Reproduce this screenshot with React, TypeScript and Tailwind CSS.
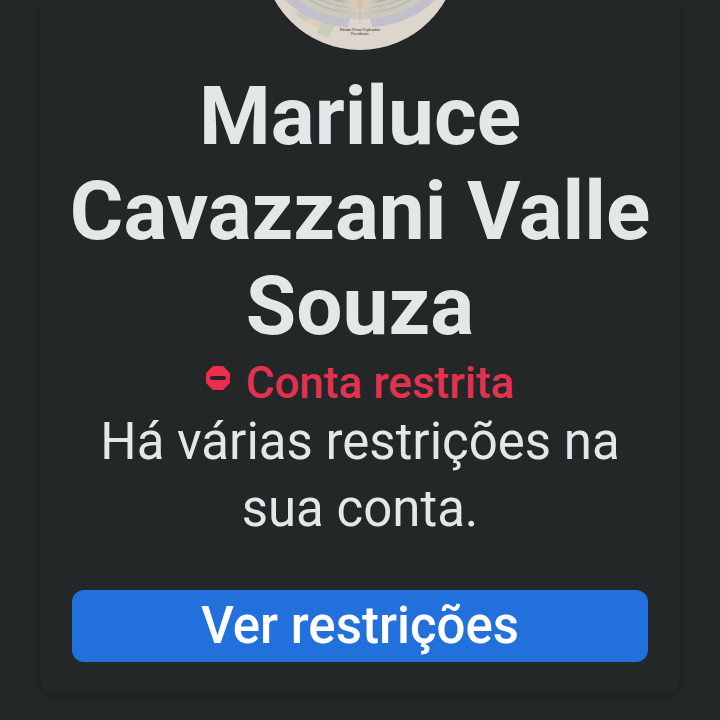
function Avatar() {
  return (
    <svg
      viewBox="0 146 196 50"
      className="mx-auto block w-[196px]"
      role="img"
      aria-label="Foto do perfil"
    >
      <defs>
        <clipPath id="avatar-clip">
          <circle cx="98" cy="98" r="98" />
        </clipPath>
        <radialGradient id="avatar-glow" cx="98" cy="149" r="22" gradientUnits="userSpaceOnUse">
          <stop offset="0" stopColor="#e8b8a4" />
          <stop offset="0.3" stopColor="#d5ccba" />
          <stop offset="1" stopColor="#c9c8bc" stopOpacity="0" />
        </radialGradient>
      </defs>
      <g clipPath="url(#avatar-clip)">
        <rect y="146" width="196" height="50" fill="#ddd6cc" />
        <path d="M42 166l16-20h16l-16 29z" fill="#d9cfb8" />
        <path d="M33 160l11-14h14l-14 22z" fill="#c5cdbc" />
        <path d="M55 179l10-18 12 4-11 19z" fill="#c6cdbe" />
        <ellipse cx="98" cy="115" rx="88" ry="59" fill="#c2c0ca" />
        <ellipse cx="98" cy="113" rx="80" ry="52" fill="#cbcabf" />
        <ellipse cx="98" cy="112" rx="73" ry="47" fill="none" stroke="#b9bdb1" strokeWidth="2" />
        <ellipse cx="98" cy="111" rx="67" ry="43" fill="none" stroke="#c2b7b6" strokeWidth="2" />
        <ellipse cx="98" cy="110" rx="62" ry="39" fill="none" stroke="#adb2a4" strokeWidth="2" />
        <rect x="76" y="146" width="44" height="22" fill="url(#avatar-glow)" />
        <path d="M88 165h20l3 10H85z" fill="#ddd6cc" />
        <path d="M98 146v24" stroke="#c2bbaf" strokeWidth="1" />
        <text
          x="98"
          y="177"
          textAnchor="middle"
          className="fill-[#67635f] font-['Liberation_Serif',serif] text-[4px] font-bold"
        >
          Divino Pleno Esplendor
        </text>
        <text
          x="98"
          y="181"
          textAnchor="middle"
          className="fill-[#67635f] font-['Liberation_Serif',serif] text-[4px] font-bold"
        >
          Presidente
        </text>
      </g>
    </svg>
  )
}

function RestrictedIcon() {
  return (
    <svg viewBox="0 0 24 24" className="mt-2 size-6 shrink-0" aria-hidden="true">
      <path
        fill="#ee2c4e"
        fillRule="evenodd"
        d="M7.800 0h8.400a2 2 0 0 1 1.400.6l5.800 5.800a2 2 0 0 1 .6 1.400v8.400a2 2 0 0 1-.6 1.400l-5.800 5.800a2 2 0 0 1-1.400.6H7.800a2 2 0 0 1-1.400-.6L.6 17.600a2 2 0 0 1-.6-1.400V7.800a2 2 0 0 1 .6-1.400L6.400.6A2 2 0 0 1 7.800 0zM6 10a2 2 0 0 0 0 4h12a2 2 0 0 0 0-4z"
      />
    </svg>
  )
}

export default function App() {
  return (
    <main className="min-h-screen bg-[#232728] px-10 pb-[26px] font-[Roboto,sans-serif] text-[#e3e7e8]">
      <section className="rounded-b-2xl bg-[#232728] px-7 pb-8 text-center shadow-[0_4px_10px_rgba(0,0,0,0.2)]">
        <Avatar />

        <h1 className="mt-[19px] text-[82px] leading-[95px] font-bold">
          Mariluce Cavazzani Valle Souza
        </h1>

        <div className="mt-1 flex justify-center gap-4 text-[#e2324f]">
          <RestrictedIcon />
          <p className="text-[44px] leading-[50px] font-medium">Conta restrita</p>
        </div>

        <p className="px-1 text-[51px] leading-[67px]">
          Há várias restrições na sua conta.
        </p>

        <div className="mt-12 px-1">
          <button
            type="button"
            className="block h-[72px] w-full rounded-xl bg-[#2270dc] text-[51px] leading-[72px] font-medium text-white"
          >
            Ver restrições
          </button>
        </div>
      </section>
    </main>
  )
}
